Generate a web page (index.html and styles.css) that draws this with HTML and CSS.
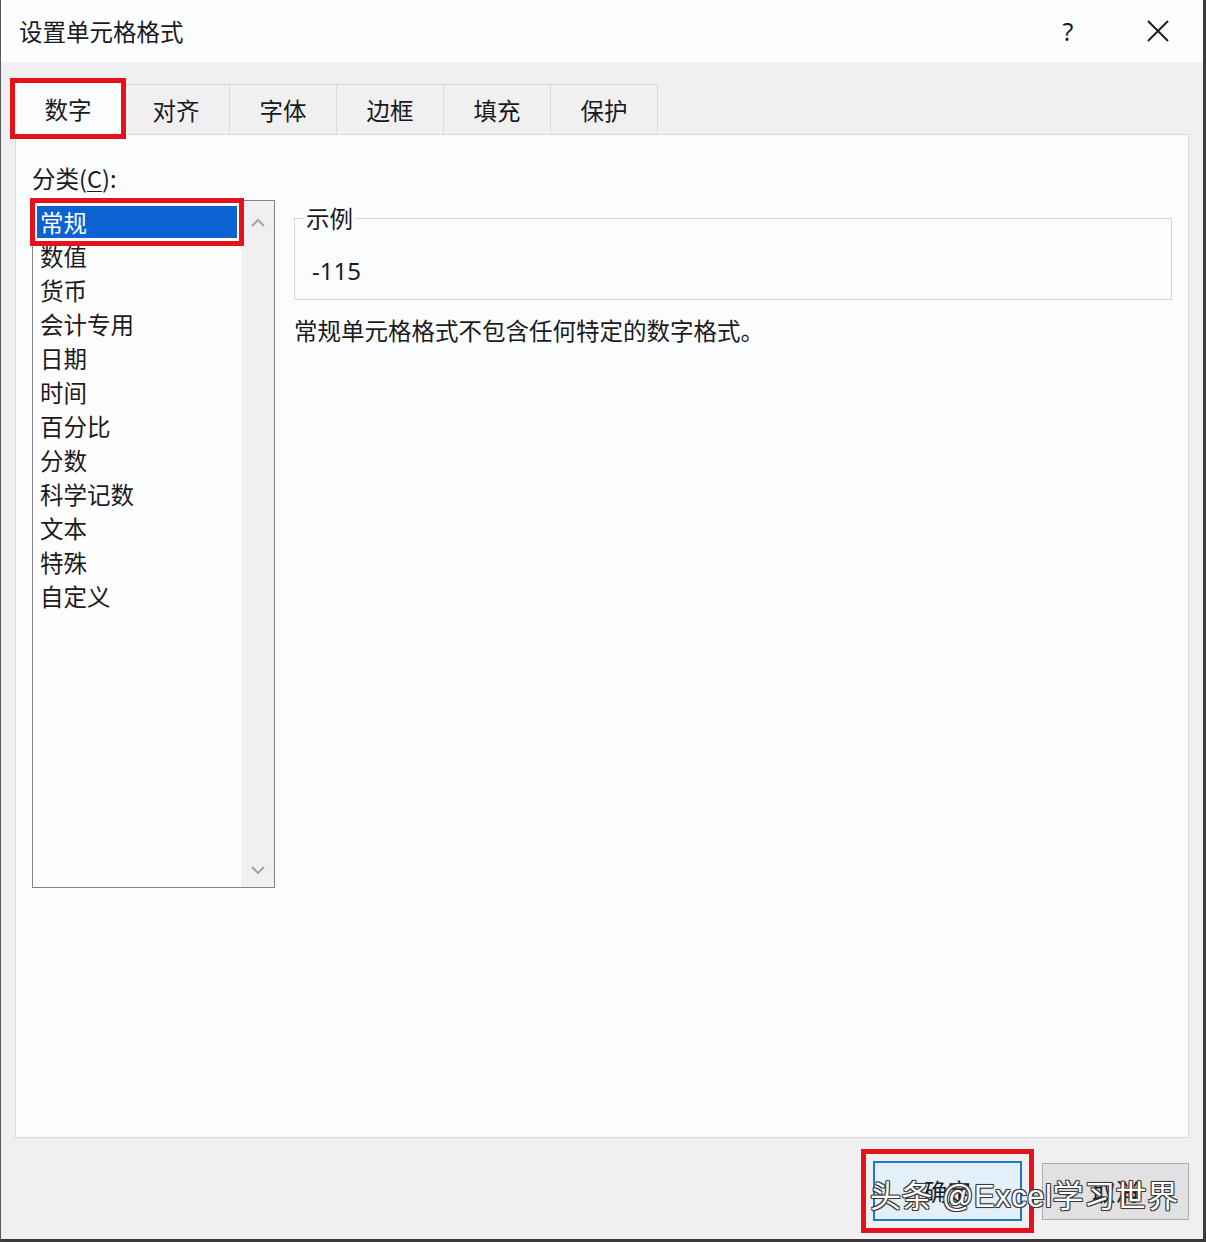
FILE: index.html
```html
<!DOCTYPE html>
<html lang="zh-CN">
<head>
<meta charset="utf-8">
<title>设置单元格格式</title>
<link rel="stylesheet" href="styles.css">
</head>
<body>
<div class="window">
  <div class="titlebar">
    <div class="title">设置单元格格式</div>
    <div class="controls">
      <div class="ctl help">?</div>
      <div class="ctl close">
        <svg width="22" height="22" viewBox="0 0 22 22"><path d="M1 1 L21 21 M21 1 L1 21" stroke="#1e1e22" stroke-width="2" fill="none"/></svg>
      </div>
    </div>
  </div>
  <div class="content">
    <div class="tabs">
      <div class="tab selected">数字</div>
      <div class="tab">对齐</div>
      <div class="tab">字体</div>
      <div class="tab">边框</div>
      <div class="tab">填充</div>
      <div class="tab">保护</div>
    </div>
    <div class="panel">
      <div class="leftcol">
        <div class="label">分类(<u>C</u>):</div>
        <div class="listbox">
          <div class="items">
            <div class="item selected">常规</div>
            <div class="item">数值</div>
            <div class="item">货币</div>
            <div class="item">会计专用</div>
            <div class="item">日期</div>
            <div class="item">时间</div>
            <div class="item">百分比</div>
            <div class="item">分数</div>
            <div class="item">科学记数</div>
            <div class="item">文本</div>
            <div class="item">特殊</div>
            <div class="item">自定义</div>
          </div>
          <div class="scrollbar">
            <svg class="arrow" width="16" height="10" viewBox="0 0 16 10"><path d="M2 8 L8 2 L14 8" stroke="#a3a3a8" stroke-width="2" fill="none"/></svg>
            <svg class="arrow" width="16" height="10" viewBox="0 0 16 10"><path d="M2 2 L8 8 L14 2" stroke="#a3a3a8" stroke-width="2" fill="none"/></svg>
          </div>
        </div>
      </div>
      <div class="rightcol">
        <fieldset class="sample">
          <legend>示例</legend>
          <div class="value">-115</div>
        </fieldset>
        <div class="desc">常规单元格格式不包含任何特定的数字格式。</div>
      </div>
    </div>
    <div class="footer">
      <div class="btn ok">确定</div>
      <div class="btn cancel">取消</div>
    </div>
  </div>
  <div class="watermark">头条 @Excel学习世界</div>
</div>
</body>
</html>
```
FILE: styles.css
```css
* { box-sizing: border-box; }
html, body { margin: 0; padding: 0; }
body {
  width: 1206px;
  height: 1242px;
  font-family: "Noto Sans CJK SC", "Noto Sans", sans-serif;
  color: #1b1a20;
  background: #f0f0f2;
}
.window {
  position: relative;
  width: 1206px;
  height: 1242px;
  border-left: 1px solid #5a5a5e;
  border-right: 3px solid #3d3a3e;
  border-bottom: 3px solid #3d3a3e;
  background: #f0f0f2;
  display: flex;
  flex-direction: column;
}
.titlebar {
  height: 62px;
  flex: none;
  background: #fcfdfe;
  display: flex;
  align-items: center;
  padding-left: 18px;
}
.title {
  font-size: 23.5px;
  line-height: 34px;
}
.controls {
  margin-left: auto;
  display: flex;
  align-items: center;
  gap: 44px;
  padding-right: 22px;
}
.ctl {
  width: 46px;
  height: 40px;
  display: flex;
  align-items: center;
  justify-content: center;
}
.help {
  font-family: "Noto Sans", sans-serif;
  font-size: 25px;
  font-weight: 400;
}
.content {
  flex: 1;
  display: flex;
  flex-direction: column;
  padding: 22px 14px 0 14px;
}
.tabs {
  display: flex;
  align-items: flex-end;
  height: 50px;
  position: relative;
  z-index: 2;
}
.tab {
  width: 108px;
  height: 50px;
  border: 1px solid #d8d9db;
  border-bottom: none;
  margin-left: -1px;
  background: #f0f0f1;
  font-size: 23.5px;
  display: flex;
  align-items: center;
  justify-content: center;
}
.tab.selected {
  width: 108px;
  height: 53px;
  margin-left: -1px;
  margin-bottom: -1px;
  margin-right: 1px;
  background: #fbfcfe;
  outline: 5px solid #e3121c;
  outline-offset: -1px;
  position: relative;
  z-index: 3;
}
.panel {
  height: 1004px;
  flex: none;
  border: 1px solid #d9dadc;
  background: #fbfcfe;
  display: flex;
  padding: 26px 16px 0 16px;
  gap: 19px;
}
.leftcol {
  width: 243px;
  flex: none;
}
.label {
  font-size: 23.5px;
  line-height: 34px;
  height: 34px;
  margin-bottom: 5px;
}
.label u { text-decoration-thickness: 1px; text-underline-offset: 3px; }
.listbox {
  width: 243px;
  height: 688px;
  border: 1px solid #86838f;
  background: #fdfdfe;
  display: flex;
}
.items {
  flex: 1;
  padding-top: 4px;
}
.item {
  height: 34px;
  line-height: 32px;
  margin: 0 4px;
  padding-left: 3px;
  font-size: 23.5px;
  border-top: 1px solid transparent;
  border-bottom: 1px solid transparent;
  background-clip: padding-box;
}
.item.selected {
  background-color: #0b63d3;
  color: #ffffff;
  outline: 5px solid #e3121c;
  outline-offset: 2px;
  position: relative;
}
.scrollbar {
  width: 33px;
  flex: none;
  background: #f0f0f1;
  display: flex;
  flex-direction: column;
  justify-content: space-between;
  align-items: center;
  padding: 17px 0 12px 0;
}
.rightcol {
  flex: 1;
  padding-top: 40px;
}
.sample {
  margin: 0;
  border: 1px solid #d3d8de;
  padding: 0 0 11px 9px;
  min-width: 0;
}
.sample legend {
  padding: 0 2px;
  font-size: 23.5px;
  line-height: 34px;
}
.value {
  padding-top: 19px;
  padding-left: 8px;
  font-family: "Noto Sans", sans-serif;
  font-size: 24px;
  line-height: 34px;
}
.desc {
  margin-top: 13px;
  font-size: 23.5px;
  line-height: 34px;
}
.footer {
  display: flex;
  justify-content: flex-end;
  align-items: center;
  gap: 20px;
  padding-top: 22px;
  padding-right: 0;
  height: 84px;
}
.btn {
  display: flex;
  align-items: center;
  justify-content: center;
  font-size: 23.5px;
}
.btn.ok {
  width: 149px;
  height: 60px;
  border: 2px solid #1d78d2;
  background: #e3eff9;
  outline: 5px solid #e3121c;
  outline-offset: 7px;
}
.btn.cancel {
  width: 147px;
  height: 57px;
  border: 1px solid #adadb0;
  background: #e1e1e3;
}
.watermark {
  position: absolute;
  left: 869px;
  top: 1177px;
  font-family: "Liberation Sans", "Noto Sans CJK SC", sans-serif;
  font-size: 31px;
  letter-spacing: 0.5px;
  line-height: 40px;
  color: #ffffff;
  text-shadow: 1px 1px 0 #3a3a3a, -1px -1px 0 #3a3a3a, 1px -1px 0 #3a3a3a, -1px 1px 0 #3a3a3a, 0 0 2px #222;
  z-index: 5;
  white-space: nowrap;
}
```
